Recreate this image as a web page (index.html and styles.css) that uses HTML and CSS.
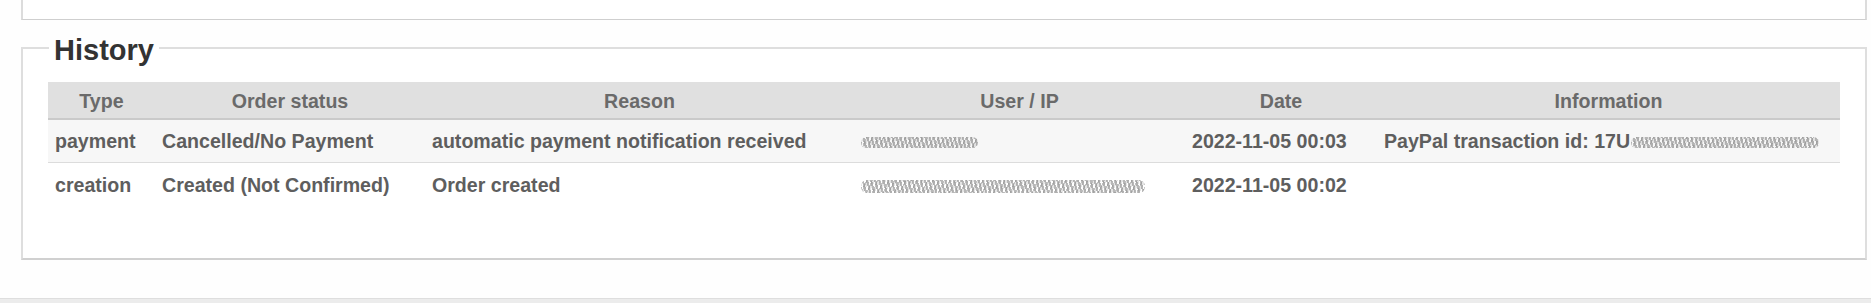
FILE: index.html
```html
<!DOCTYPE html>
<html>
<head>
<meta charset="utf-8">
<link rel="stylesheet" href="styles.css">
</head>
<body>
<div class="top-box"></div>
<fieldset class="history">
  <legend>History</legend>
  <table class="history-table">
    <colgroup>
      <col class="c-type"><col class="c-status"><col class="c-reason"><col class="c-user"><col class="c-date"><col class="c-info">
    </colgroup>
    <thead>
      <tr><th>Type</th><th>Order status</th><th>Reason</th><th>User / IP</th><th>Date</th><th>Information</th></tr>
    </thead>
    <tbody>
      <tr class="odd">
        <td>payment</td>
        <td>Cancelled/No Payment</td>
        <td>automatic payment notification received</td>
        <td><span class="redacted r-short"></span></td>
        <td>2022-11-05 00:03</td>
        <td>PayPal transaction id: 17U<span class="redacted r-info"></span></td>
      </tr>
      <tr>
        <td>creation</td>
        <td>Created (Not Confirmed)</td>
        <td>Order created</td>
        <td><span class="redacted r-long"></span></td>
        <td>2022-11-05 00:02</td>
        <td></td>
      </tr>
    </tbody>
  </table>
</fieldset>
<div class="footer-bar"></div>
</body>
</html>
```
FILE: styles.css
```css
html, body {
  margin: 0;
  padding: 0;
  background: #fefefe;
  font-family: "Liberation Sans", Arial, Helvetica, sans-serif;
}
body {
  width: 1871px;
  height: 303px;
  position: relative;
  overflow: hidden;
}
.top-box {
  margin: 0 4px 0 21px;
  height: 19px;
  border: 2px solid #dcdcdc;
  border-top: none;
  border-bottom: 1px solid #cfcfcf;
  background: #fff;
}
.history {
  margin: 10px 4px 0 21px;
  padding: 0 25px 51px 25px;
  border: 2px solid #dedede;
  border-bottom-color: #d0d0d0;
  background: #fff;
  min-width: 0;
}
.history legend {
  font-size: 29px;
  font-weight: bold;
  color: #333;
  padding: 4px 5px 0;
  margin-left: 1px;
  line-height: 32px;
}
.history-table {
  width: 100%;
  border-collapse: collapse;
  table-layout: fixed;
  margin-top: 16px;
  font-size: 19.6px;
  font-weight: bold;
  color: #5e5e5e;
}
.c-type { width: 107px; }
.c-status { width: 270px; }
.c-reason { width: 429px; }
.c-user { width: 331px; }
.c-date { width: 192px; }
.c-info { width: auto; }
.history-table th {
  background: #e0e0e0;
  color: #6a6a6a;
  height: 33px;
  padding: 3px 7px 0;
  text-align: center;
  border-bottom: 2px solid #cacaca;
  font-weight: bold;
}
.history-table td {
  height: 42px;
  padding: 0 7px;
  text-align: left;
  white-space: nowrap;
  border-bottom: 1px solid #dcdcdc;
}
.history-table tbody tr:last-child td {
  height: 44px;
  border-bottom: none;
}
.history-table tr.odd td {
  background: #f7f7f7;
}
.redacted {
  display: inline-block;
  vertical-align: middle;
  height: 11px;
  border-radius: 6px;
  background:
    repeating-linear-gradient(75deg, rgba(120,120,120,.65) 0 2px, rgba(255,255,255,0) 2px 4px),
    repeating-linear-gradient(115deg, rgba(100,100,100,.5) 0 1px, rgba(200,200,200,.6) 1px 3px, rgba(255,255,255,0) 3px 5px);
  opacity: .8;
}
.r-short { width: 117px; }
.r-long { width: 284px; height: 13px; }
.r-info { width: 188px; margin-left: 1px; }
.footer-bar {
  position: absolute;
  left: 0;
  right: 0;
  bottom: 0;
  height: 4px;
  background: #ececec;
  border-top: 1px solid #dedede;
}
```
